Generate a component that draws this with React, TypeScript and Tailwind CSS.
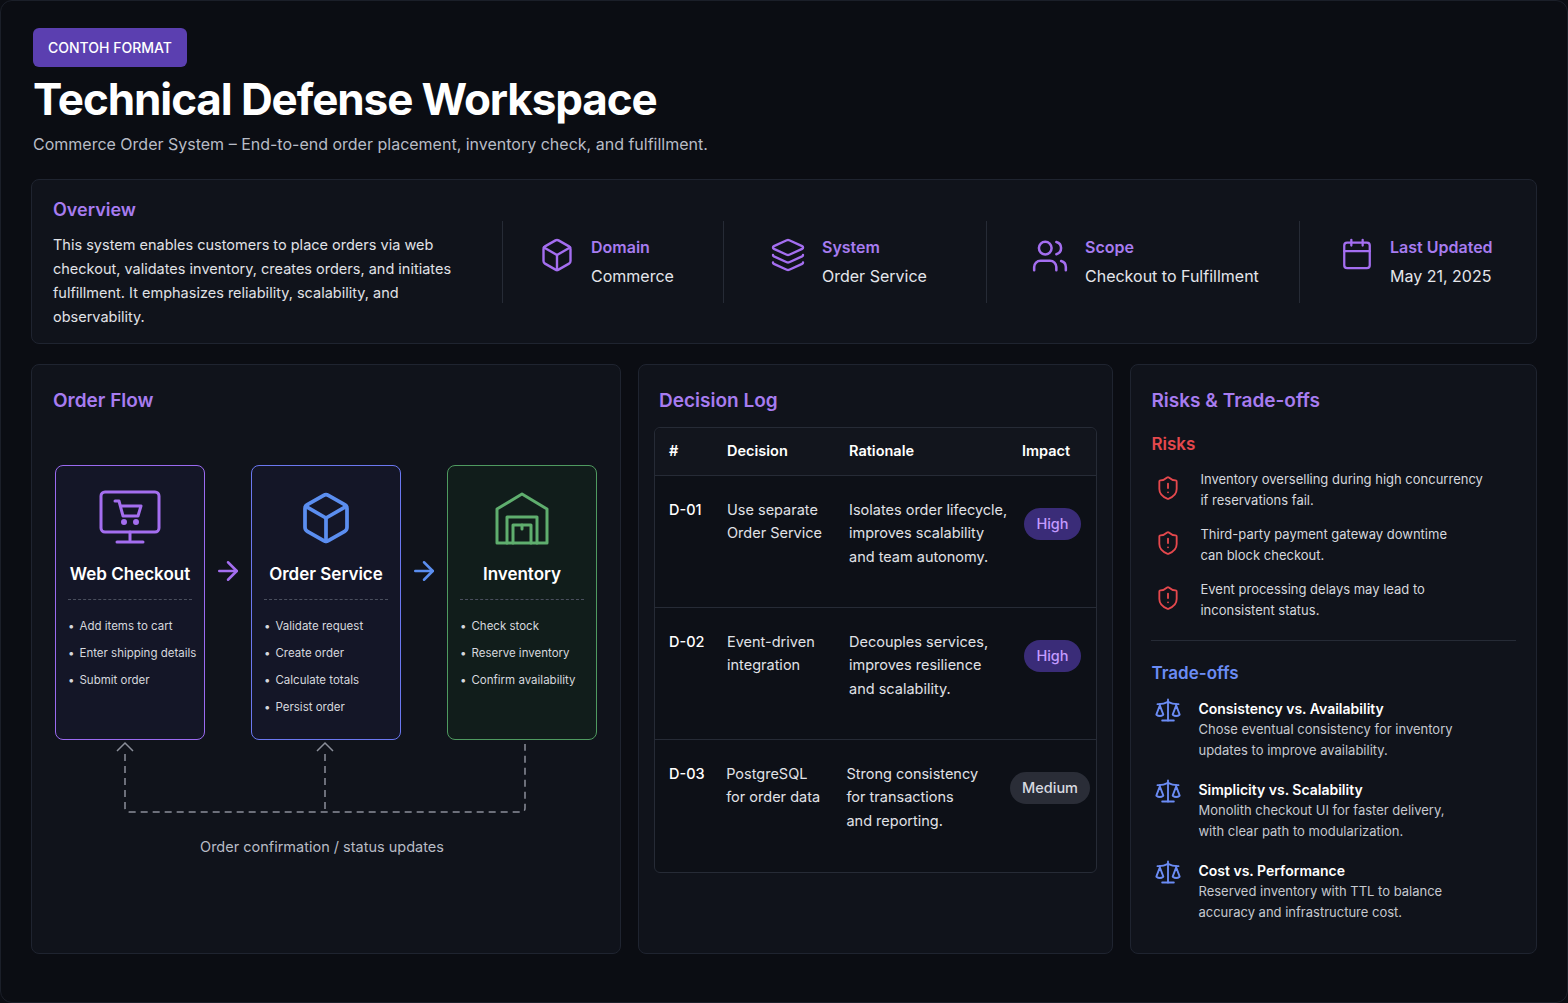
import React from "react";
import { Box, Layers, Users, Calendar, ShieldAlert, Scale, ArrowRight } from "lucide-react";

const F = { fontFamily: "Inter, 'Noto Sans', sans-serif" };

function MonitorCart() {
  return (
    <svg width="62" height="56" viewBox="0 0 62 56" fill="none" stroke="#a46ef0" strokeWidth="3" strokeLinecap="round" strokeLinejoin="round">
      <rect x="2" y="2" width="58" height="40" rx="4" />
      <path d="M31 42v8M18 52h26" />
      <path d="M16 11h4l4 15h15l3-10H22" />
      <circle cx="25" cy="32" r="1.5" fill="#a46ef0" />
      <circle cx="37" cy="32" r="1.5" fill="#a46ef0" />
    </svg>
  );
}

function WarehouseIcon() {
  return (
    <svg width="56" height="54" viewBox="0 0 56 54" fill="none" stroke="#5fae6e" strokeWidth="3" strokeLinecap="round" strokeLinejoin="round">
      <path d="M3 52V18L28 3l25 15v34z" />
      <path d="M13 52V26h30v26" />
      <path d="M19 52V34h18v18" />
      <path d="M28 34v4" />
    </svg>
  );
}

function FlowBox({ title, items, icon, border, bg }: { title: string; items: string[]; icon: React.ReactNode; border: string; bg: string }) {
  return (
    <div className={`w-[150px] h-[275px] rounded-lg border ${border} ${bg} flex flex-col items-center pt-[24px] px-[12px]`}>
      <div className="h-[56px] flex items-center justify-center">{icon}</div>
      <div className="mt-[16px] text-[17px] font-semibold text-white whitespace-nowrap">{title}</div>
      <div className="w-full mt-[12px] border-t border-dashed border-[#4a4f5e]" />
      <ul className="w-full mt-[18px] flex flex-col gap-[11px] text-[11.5px] leading-[16px] text-[#d6d8de]">
        {items.map((i) => (
          <li key={i} className="flex gap-[5px] whitespace-nowrap"><span>•</span><span>{i}</span></li>
        ))}
      </ul>
    </div>
  );
}

function Meta({ icon, label, value }: { icon: React.ReactNode; label: string; value: string }) {
  return (
    <div className="flex items-start gap-[16px]">
      <div className="mt-[2px]">{icon}</div>
      <div>
        <div className="text-[16px] font-semibold text-[#a77cf0]">{label}</div>
        <div className="mt-[5px] text-[16px] text-[#e4e6eb]">{value}</div>
      </div>
    </div>
  );
}

const rows = [
  { id: "D-01", d: ["Use separate", "Order Service"], r: ["Isolates order lifecycle,", "improves scalability", "and team autonomy."], imp: "High" },
  { id: "D-02", d: ["Event-driven", "integration"], r: ["Decouples services,", "improves resilience", "and scalability."], imp: "High" },
  { id: "D-03", d: ["PostgreSQL", "for order data"], r: ["Strong consistency", "for transactions", "and reporting."], imp: "Medium" },
];

export default function App() {
  return (
    <div style={F} className="w-[1568px] h-[1003px] bg-[#0b0d13] overflow-hidden">
      <div className="h-full rounded-xl border border-[#1b1f29] px-[30px] pt-[27px]">
        <div className="inline-block rounded-md bg-[#5b3fb0] px-[15px] py-[9px] text-[14px] font-medium text-white ml-[2px]">CONTOH FORMAT</div>
        <h1 className="mt-[8px] ml-[2px] text-[44px] font-bold text-white leading-[48px] tracking-tight">Technical Defense Workspace</h1>
        <p className="mt-[9px] ml-[2px] text-[16px] leading-[24px] text-[#b8bcc6]">Commerce Order System – End-to-end order placement, inventory check, and fulfillment.</p>

        <div className="mt-[23px] h-[165px] rounded-lg border border-[#1f2430] bg-[#10131b] flex items-center">
          <div className="w-[470px] pl-[21px] pr-[20px] pt-[2px]">
            <div className="text-[18px] font-semibold text-[#a77cf0]">Overview</div>
            <p className="mt-[10px] text-[14.5px] leading-[24px] text-[#e0e2e7]">This system enables customers to place orders via web checkout, validates inventory, creates orders, and initiates fulfillment. It emphasizes reliability, scalability, and observability.</p>
          </div>
          <div className="h-[82px] border-l border-[#262b36]" />
          <div className="w-[220px] pl-[36px]"><Meta icon={<Box size={36} color="#a46ef0" strokeWidth={1.6} />} label="Domain" value="Commerce" /></div>
          <div className="h-[82px] border-l border-[#262b36]" />
          <div className="w-[262px] pl-[46px]"><Meta icon={<Layers size={36} color="#a46ef0" strokeWidth={1.6} />} label="System" value="Order Service" /></div>
          <div className="h-[82px] border-l border-[#262b36]" />
          <div className="w-[312px] pl-[44px]"><Meta icon={<Users size={38} color="#a46ef0" strokeWidth={1.6} />} label="Scope" value="Checkout to Fulfillment" /></div>
          <div className="h-[82px] border-l border-[#262b36]" />
          <div className="pl-[40px]"><Meta icon={<Calendar size={34} color="#a46ef0" strokeWidth={1.6} />} label="Last Updated" value="May 21, 2025" /></div>
        </div>

        <div className="mt-[20px] flex gap-[17px]">
          <div className="w-[590px] h-[590px] rounded-lg border border-[#1f2430] bg-[#10131b] px-[21px] pt-[22px]">
            <div className="text-[19px] font-semibold text-[#a77cf0]">Order Flow</div>
            <div className="mt-[49px] ml-[2px] flex items-start">
              <FlowBox title="Web Checkout" items={["Add items to cart", "Enter shipping details", "Submit order"]} icon={<MonitorCart />} border="border-[#9a6af0]" bg="bg-[#141627]" />
              <div className="w-[46px] pt-[91px] flex justify-center"><ArrowRight size={30} color="#a46ef0" strokeWidth={2} /></div>
              <FlowBox title="Order Service" items={["Validate request", "Create order", "Calculate totals", "Persist order"]} icon={<Box size={56} color="#5b8ef0" strokeWidth={1.6} />} border="border-[#6b78f0]" bg="bg-[#141627]" />
              <div className="w-[46px] pt-[91px] flex justify-center"><ArrowRight size={30} color="#5b8ef0" strokeWidth={2} /></div>
              <FlowBox title="Inventory" items={["Check stock", "Reserve inventory", "Confirm availability"]} icon={<WarehouseIcon />} border="border-[#4f9a60]" bg="bg-[#111d1b]" />
            </div>
            <svg width="545" height="78" className="ml-[2px]" fill="none" stroke="#8b8f9a" strokeWidth="1.5">
              <path d="M70 14 V68 Q70 72 74 72 H466 Q470 72 470 68 V4" strokeDasharray="7 5" />
              <path d="M270 14 V72" strokeDasharray="7 5" />
              <path d="M62 11 L70 3 L78 11 M262 11 L270 3 L278 11" />
            </svg>
            <div className="mt-[18px] text-center text-[14.5px] text-[#b8bcc6] pr-[8px]">Order confirmation / status updates</div>
          </div>

          <div className="w-[476px] h-[590px] rounded-lg border border-[#1f2430] bg-[#10131b] px-[15px] pt-[22px]">
            <div className="ml-[5px] text-[19px] font-semibold text-[#a77cf0]">Decision Log</div>
            <div className="mt-[11px] w-[443px] rounded-md border border-[#262b36] bg-[#0d1017]">
              <div className="h-[48px] flex items-center text-[14.5px] font-semibold text-white border-b border-[#262b36] bg-[#12151d] rounded-t-md">
                <div className="w-[72px] pl-[14px]">#</div>
                <div className="w-[122px]">Decision</div>
                <div className="w-[173px]">Rationale</div>
                <div>Impact</div>
              </div>
              {rows.map((r, i) => (
                <div key={r.id} className={`h-[132px] flex pt-[22px] text-[14.5px] text-[#e0e2e7] leading-[23.5px] ${i < 2 ? "border-b border-[#262b36]" : ""}`}>
                  <div className="w-[72px] pl-[14px] font-medium text-white">{r.id}</div>
                  <div className="w-[122px]">{r.d.map((t) => <div key={t}>{t}</div>)}</div>
                  <div className="w-[166px] whitespace-nowrap">{r.r.map((t) => <div key={t}>{t}</div>)}</div>
                  <div className="flex-1 flex justify-center pt-[10px] pr-[6px]">
                    {r.imp === "High" ? (
                      <span className="h-[32px] px-[12px] rounded-full bg-[#3a2c78] text-[#c49bff] font-medium flex items-center">High</span>
                    ) : (
                      <span className="h-[32px] px-[12px] rounded-full bg-[#2a2d37] text-[#d8dae0] font-medium flex items-center">Medium</span>
                    )}
                  </div>
                </div>
              ))}
            </div>
          </div>

          <div className="w-[407px] h-[590px] rounded-lg border border-[#1f2430] bg-[#10131b] px-[20px] pt-[22px]">
            <div className="text-[19px] font-semibold text-[#a77cf0]">Risks &amp; Trade-offs</div>
            <div className="mt-[16px] text-[17px] font-semibold text-[#e5484d]">Risks</div>
            <div className="mt-[12px] flex flex-col gap-[14px]">
              {[
                ["Inventory overselling during high concurrency", "if reservations fail."],
                ["Third-party payment gateway downtime", "can block checkout."],
                ["Event processing delays may lead to", "inconsistent status."],
              ].map((t) => (
                <div key={t[0]} className="flex gap-[19px] text-[13px] leading-[20.5px] text-[#d6d8de]">
                  <ShieldAlert size={26} color="#e5484d" strokeWidth={1.7} className="mt-[6px] ml-[4px] shrink-0" />
                  <div>{t.map((x) => <div key={x}>{x}</div>)}</div>
                </div>
              ))}
            </div>
            <div className="mt-[20px] border-t border-[#262b36]" />
            <div className="mt-[20px] text-[17px] font-semibold text-[#6b8cf5]">Trade-offs</div>
            <div className="mt-[11px] flex flex-col gap-[18px]">
              {[
                ["Consistency vs. Availability", "Chose eventual consistency for inventory", "updates to improve availability."],
                ["Simplicity vs. Scalability", "Monolith checkout UI for faster delivery,", "with clear path to modularization."],
                ["Cost vs. Performance", "Reserved inventory with TTL to balance", "accuracy and infrastructure cost."],
              ].map((t) => (
                <div key={t[0]} className="flex gap-[16px] text-[13px] leading-[21px]">
                  <Scale size={28} color="#6b8cf5" strokeWidth={1.6} className="mt-[-2px] ml-[3px] shrink-0" />
                  <div>
                    <div className="text-[14px] font-semibold text-white">{t[0]}</div>
                    <div className="text-[#c6c9d0]">{t[1]}</div>
                    <div className="text-[#c6c9d0]">{t[2]}</div>
                  </div>
                </div>
              ))}
            </div>
          </div>
        </div>
      </div>
    </div>
  );
}
